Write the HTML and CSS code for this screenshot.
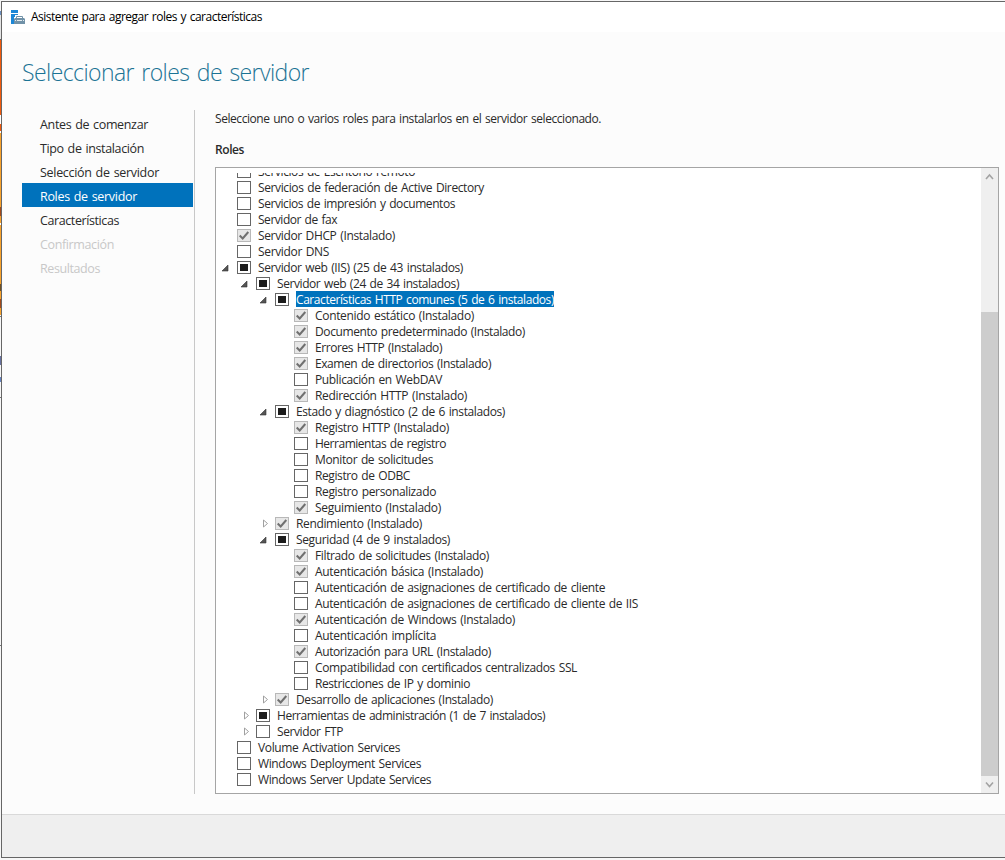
FILE: index.html
```
<!DOCTYPE html>
<html lang="es">
<head>
<meta charset="utf-8">
<title>Asistente para agregar roles y características</title>
<link rel="stylesheet" href="styles.css">
</head>
<body>
<div class="desktop-edge"></div>
<div class="window">
  <header class="titlebar">
    <svg class="app-icon" width="14" height="14" viewBox="0 0 14 14"><path fill="#1c87d6" d="M0 0h7v3H0zM0 4h7v1H4v2H3v7H0z"/><path fill="none" stroke="#7192a8" d="M5.500 8V6.500h6V8"/><path fill="#7192a8" d="M4 8h9l1 1v5H3V9z"/><path stroke="#e4ecf0" d="M4 10.500h1M6 10.500h5M12 10.500h1"/></svg>
    <span class="fit" data-w="231">Asistente para agregar roles y características</span>
  </header>
  <main class="content">
    <h1><span class="fit" data-w="287">Seleccionar roles de servidor</span></h1>
    <div class="columns">
      <nav class="steps">
        <div class="step"><span class="fit" data-w="108">Antes de comenzar</span></div>
        <div class="step"><span class="fit" data-w="104">Tipo de instalación</span></div>
        <div class="step"><span class="fit" data-w="119">Selección de servidor</span></div>
        <div class="step current"><span class="fit" data-w="97">Roles de servidor</span></div>
        <div class="step"><span class="fit" data-w="79">Características</span></div>
        <div class="step disabled"><span class="fit" data-w="74">Confirmación</span></div>
        <div class="step disabled"><span class="fit" data-w="60">Resultados</span></div>
      </nav>
      <section class="panel">
        <p class="intro"><span class="fit" data-w="386">Seleccione uno o varios roles para instalarlos en el servidor seleccionado.</span></p>
        <h2><span class="fit" data-w="29">Roles</span></h2>
        <div class="listbox">
          <div class="tree" id="tree"></div>
          <div class="scrollbar">
            <svg width="17" height="17" viewBox="0 0 17 17"><path d="M5 11l3.500-4 3.500 4" fill="none" stroke="#a3a3a3" stroke-width="1.600"/></svg>
            <div class="thumb"></div>
            <svg width="17" height="17" viewBox="0 0 17 17"><path d="M5 6.500l3.500 4 3.500-4" fill="none" stroke="#a3a3a3" stroke-width="1.600"/></svg>
          </div>
        </div>
      </section>
    </div>
  </main>
  <footer class="footer"></footer>
</div>
<script src="tree.js"></script>
</body>
</html>
```
FILE: styles.css
```
* { box-sizing: border-box; }
body {
  margin: 0;
  width: 1005px;
  height: 860px;
  overflow: hidden;
  display: flex;
  background: #f7f7f7;
  font: 12px/16px "Open Sans", "Noto Sans", sans-serif;
  word-spacing: 1px;
  color: #2a2a2a;
}
.desktop-edge {
  width: 1px;
  flex: none;
  background: linear-gradient(#f5f5f5 0 11px, #6b8fc0 11px 15px, #e4e4e4 15px 39px, #666 39px 40px, #f25a0c 40px 115px, #fff 115px 124px, #f25a0c 124px 131px, #fff 131px 133px, #f9a32b 133px 207px, #a44a1a 207px 216px, #f9a32b 216px 223px, #fff 223px 225px, #f9a32b 225px 284px, #725020 284px 291px, #f9a32b 291px 299px, #a44a1a 299px 308px, #f9a32b 308px 315px, #f7f7f7 315px 316px, #777 316px 317px, #f7f7f7 317px 356px, #6872a0 356px 365px, #f7f7f7 365px 377px, #6683c0 377px 382px, #f7f7f7 382px 397px, #777 397px 398px, #f7f7f7 398px 645px, #777 645px 646px, #f7f7f7 646px);
}
.window {
  width: 1004px;
  height: 857px;
  margin-top: 1px;
  display: flex;
  flex-direction: column;
  border: 1px solid #666;
  border-right: 0;
  background: #fcfcfc;
}
.fit { display: inline-block; white-space: pre; }
.titlebar {
  height: 30px;
  flex: none;
  display: flex;
  align-items: center;
  gap: 6px;
  padding-left: 9px;
  background: #fff;
  color: #000;
}
.content { flex: 1; padding: 22px 0 0 20px; }
h1 {
  margin: 0;
  height: 56px;
  font: 300 23px/36px "Open Sans", sans-serif;
  word-spacing: 2px;
  color: #1b7394;
}
.columns { display: flex; }
.steps {
  width: 173px;
  height: 684px;
  padding: 1px 1px 0 0;
  border-right: 1px solid #c8c8c8;
}
.step {
  height: 24px;
  padding-left: 18px;
  font-size: 12.5px;
  line-height: 27px;
}
.current { background: #0072bc; color: #fff; }
.disabled { color: #c8c8c8; }
.panel { padding-left: 20px; }
.intro { margin: 0; padding-top: 1px; height: 32px; }
h2 { margin: 0; height: 25px; font-size: 12px; font-weight: 600; line-height: 16px; }
.listbox {
  width: 784px;
  height: 627px;
  display: flex;
  border: 1px solid #a5a5a5;
  background: #fff;
}
.tree {
  flex: 1;
  margin-top: 5px;
  overflow: hidden;
  display: flex;
  flex-direction: column;
}
.row {
  height: 16px;
  flex: none;
  display: flex;
  padding-left: calc(5px + var(--level) * 19px);
}
.row:first-child { margin-top: -10px; }
.arrow { width: 10px; height: 16px; margin-right: 6px; flex: none; }
.box {
  width: 14px;
  height: 13px;
  margin: 2px 7px 0 0;
  flex: none;
  border: 1px solid #666;
  background: #fff;
}
.box svg { display: block; }
.box.partial { padding: 2px; }
.box.partial::before { content: ""; display: block; width: 8px; height: 7px; background: #1d1d1d; }
.box.checked { border-color: #b8b8b8; background: #e7e7e7; }
.label { height: 16px; line-height: 18px; }
.selected { background: #0072bc; color: #fff; }
.scrollbar {
  width: 17px;
  display: flex;
  flex-direction: column;
  justify-content: space-between;
  background: #efefef;
}
.thumb { height: 464px; margin-top: 127px; background: #cdcdcd; }
.footer { height: 43px; flex: none; border-top: 1px solid #d9d9d9; background: #efefef; }
```
FILE: tree.js
```
// level, checkbox state, arrow state, label, label width
const roles = [
  [0, '', '', 'Servicios de Escritorio remoto', 157],
  [0, '', '', 'Servicios de federación de Active Directory', 226],
  [0, '', '', 'Servicios de impresión y documentos', 197],
  [0, '', '', 'Servidor de fax', 79],
  [0, 'checked', '', 'Servidor DHCP (Instalado)', 137],
  [0, '', '', 'Servidor DNS', 71],
  [0, 'partial', 'open', 'Servidor web (IIS) (25 de 43 instalados)', 205],
  [1, 'partial', 'open', 'Servidor web (24 de 34 instalados)', 182],
  [2, 'partial', 'open', 'Características HTTP comunes (5 de 6 instalados)', 258],
  [3, 'checked', '', 'Contenido estático (Instalado)', 159],
  [3, 'checked', '', 'Documento predeterminado (Instalado)', 210],
  [3, 'checked', '', 'Errores HTTP (Instalado)', 127],
  [3, 'checked', '', 'Examen de directorios (Instalado)', 176],
  [3, '', '', 'Publicación en WebDAV', 127],
  [3, 'checked', '', 'Redirección HTTP (Instalado)', 152],
  [2, 'partial', 'open', 'Estado y diagnóstico (2 de 6 instalados)', 209],
  [3, 'checked', '', 'Registro HTTP (Instalado)', 134],
  [3, '', '', 'Herramientas de registro', 131],
  [3, '', '', 'Monitor de solicitudes', 118],
  [3, '', '', 'Registro de ODBC', 95],
  [3, '', '', 'Registro personalizado', 121],
  [3, 'checked', '', 'Seguimiento (Instalado)', 126],
  [2, 'checked', 'closed', 'Rendimiento (Instalado)', 126],
  [2, 'partial', 'open', 'Seguridad (4 de 9 instalados)', 154],
  [3, 'checked', '', 'Filtrado de solicitudes (Instalado)', 174],
  [3, 'checked', '', 'Autenticación básica (Instalado)', 168],
  [3, '', '', 'Autenticación de asignaciones de certificado de cliente', 290],
  [3, '', '', 'Autenticación de asignaciones de certificado de cliente de IIS', 323],
  [3, 'checked', '', 'Autenticación de Windows (Instalado)', 200],
  [3, '', '', 'Autenticación implícita', 121],
  [3, 'checked', '', 'Autorización para URL (Instalado)', 176],
  [3, '', '', 'Compatibilidad con certificados centralizados SSL', 262],
  [3, '', '', 'Restricciones de IP y dominio', 155],
  [2, 'checked', 'closed', 'Desarrollo de aplicaciones (Instalado)', 197],
  [1, 'partial', 'closed', 'Herramientas de administración (1 de 7 instalados)', 268],
  [1, '', 'closed', 'Servidor FTP', 66],
  [0, '', '', 'Volume Activation Services', 142],
  [0, '', '', 'Windows Deployment Services', 163],
  [0, '', '', 'Windows Server Update Services', 173]
];
const arrows = {
  '': '',
  open: '<path d="M7 6v6H1z" fill="#555" stroke="#333" stroke-width=".6"/>',
  closed: '<path d="M4.500 5v7l4-3.500z" fill="#fff" stroke="#a0a0a0"/>'
};
const tick = '<svg width="12" height="11" viewBox="0 0 12 11"><path d="M1.700 5.500l3 3L10.300 2" fill="none" stroke="#707070" stroke-width="2"/></svg>';
document.getElementById('tree').innerHTML = roles.map(([level, state, arrow, text, w]) =>
  `<div class="row" style="--level:${level}"><svg class="arrow" viewBox="0 0 10 16">${arrows[arrow]}</svg>` +
  `<span class="box ${state}">${state === 'checked' ? tick : ''}</span>` +
  `<span class="label fit${text.includes('comunes') ? ' selected' : ''}" data-w="${w}">${text}</span></div>`).join('');

// Track each label so that it fills its measured width
document.querySelectorAll('.fit').forEach(el => {
  const gap = (Number(el.dataset.w) - el.getBoundingClientRect().width) / el.textContent.length;
  el.style.letterSpacing = gap + 'px';
});
```
